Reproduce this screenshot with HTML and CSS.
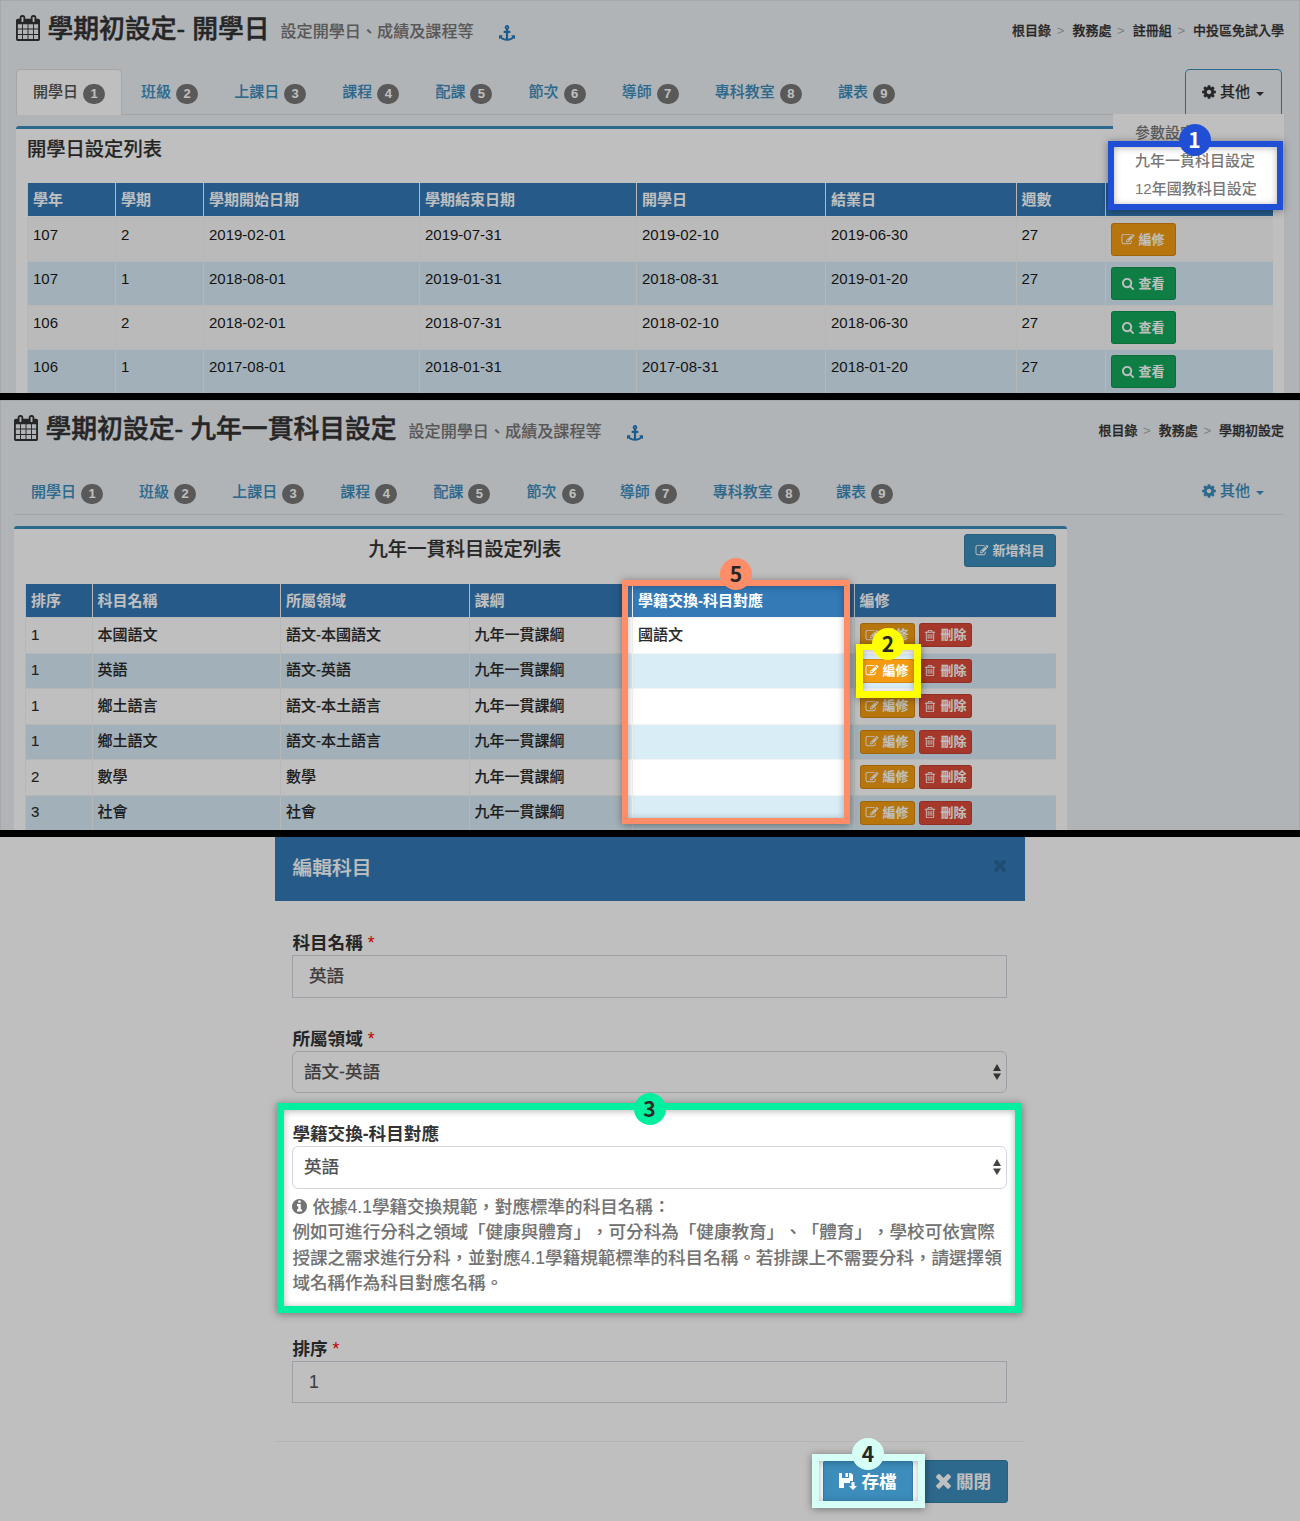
FILE: index.html
```html
<!DOCTYPE html>
<html lang="zh-Hant">
<head>
<meta charset="utf-8">
<title>學期初設定</title>
<link rel="stylesheet" href="styles.css">
</head>
<body>
<svg class="defs" width="0" height="0" aria-hidden="true">
<symbol id="calendar" viewBox="0 0 1664 1792"><path d="M128 1664h288v-288h-288v288zm352 0h320v-288h-320v288zm-352-352h288v-320h-288v320zm352 0h320v-320h-320v320zm-352-384h288v-288h-288v288zm736 736h320v-288h-320v288zm-384-736h320v-288h-320v288zm768 736h288v-288h-288v288zm-384-352h320v-320h-320v320zm-352-864v-288q0-13-9.5-22.5t-22.5-9.5h-64q-13 0-22.5 9.5t-9.5 22.5v288q0 13 9.5 22.5t22.5 9.5h64q13 0 22.5-9.5t9.5-22.5zm736 864h288v-320h-288v320zm-384-384h320v-288h-320v288zm384 0h288v-288h-288v288zm32-480v-288q0-13-9.5-22.5t-22.5-9.5h-64q-13 0-22.5 9.5t-9.5 22.5v288q0 13 9.5 22.5t22.5 9.5h64q13 0 22.5-9.5t9.5-22.5zm384-64v1280q0 52-38 90t-90 38h-1408q-52 0-90-38t-38-90v-1280q0-52 38-90t90-38h128v-96q0-66 47-113t113-47h64q66 0 113 47t47 113v96h384v-96q0-66 47-113t113-47h64q66 0 113 47t47 113v96h128q52 0 90 38t38 90z"/></symbol>
<symbol id="cog" viewBox="0 0 1792 1792"><path d="M1152 896q0-106-75-181t-181-75-181 75-75 181 75 181 181 75 181-75 75-181zm512-109v222q0 12-8 23t-20 13l-185 28q-19 54-39 91 35 50 107 138 10 12 10 25t-9 23q-27 37-99 108t-94 71q-12 0-26-9l-138-108q-44 23-91 38-16 136-29 186-7 28-36 28h-222q-14 0-24.5-8.5t-11.5-21.5l-28-184q-49-16-90-37l-141 107q-10 9-25 9-14 0-25-11-126-114-165-168-7-10-7-23 0-12 8-23 15-21 51-66.5t54-70.5q-27-50-41-99l-183-27q-13-2-21-12.5t-8-23.5v-222q0-12 8-23t19-13l186-28q14-46 39-92-40-57-107-138-10-12-10-24 0-10 9-23 26-36 98.5-107.5t94.5-71.5q13 0 26 10l138 107q44-23 91-38 16-136 29-186 7-28 36-28h222q14 0 24.5 8.5t11.5 21.5l28 184q49 16 90 37l142-107q9-9 24-9 13 0 25 10 129 119 165 170 7 8 7 22 0 12-8 23-15 21-51 66.5t-54 70.5q26 50 41 98l183 28q13 2 21 12.5t8 23.5z"/></symbol>
<symbol id="edit" viewBox="0 0 1792 1792"><path d="M888 1184l116-116-152-152-116 116v56h96v96h56zm440-720q-16-16-33 1l-350 350q-17 17-1 33t33-1l350-350q17-17 1-33zm80 594v190q0 119-84.5 203.5t-203.5 84.5h-832q-119 0-203.5-84.5t-84.5-203.5v-832q0-119 84.5-203.5t203.5-84.5h832q63 0 117 25 15 7 18 23 3 17-9 29l-49 49q-14 14-32 8-23-6-45-6h-832q-66 0-113 47t-47 113v832q0 66 47 113t113 47h832q66 0 113-47t47-113v-126q0-13 9-22l64-64q15-15 35-7t20 29zm-96-738l288 288-672 672h-288v-288zm444 132l-92 92-288-288 92-92q28-28 68-28t68 28l152 152q28 28 28 68t-28 68z"/></symbol>
<symbol id="search" viewBox="0 0 1792 1792"><path d="M1216 832q0-185-131.5-316.5t-316.5-131.5-316.5 131.5-131.5 316.5 131.5 316.5 316.5 131.5 316.5-131.5 131.5-316.5zm512 832q0 52-38 90t-90 38q-54 0-90-38l-343-342q-179 124-399 124-143 0-273.5-55.5t-225-150-150-225-55.5-273.5 55.5-273.5 150-225 225-150 273.5-55.5 273.5 55.5 225 150 150 225 55.5 273.5q0 220-124 399l343 343q37 37 37 90z"/></symbol>
<symbol id="trash" viewBox="0 0 1792 1792"><path d="M704 736v576q0 14-9 23t-23 9h-64q-14 0-23-9t-9-23v-576q0-14 9-23t23-9h64q14 0 23 9t9 23zm256 0v576q0 14-9 23t-23 9h-64q-14 0-23-9t-9-23v-576q0-14 9-23t23-9h64q14 0 23 9t9 23zm256 0v576q0 14-9 23t-23 9h-64q-14 0-23-9t-9-23v-576q0-14 9-23t23-9h64q14 0 23 9t9 23zm128 724v-948h-896v948q0 22 7 40.5t14.5 27 10.5 8.5h832q3 0 10.5-8.5t14.5-27 7-40.5zm-672-1076h448l-48-117q-7-9-17-11h-317q-10 2-17 11zm928 32v64q0 14-9 23t-23 9h-96v948q0 83-47 143.5t-113 60.5h-832q-66 0-113-58.5t-47-141.5v-952h-96q-14 0-23-9t-9-23v-64q0-14 9-23t23-9h309l70-167q15-37 54-63t79-26h320q40 0 79 26t54 63l70 167h309q14 0 23 9t9 23z"/></symbol>
<symbol id="info" viewBox="128 128 1536 1536"><path d="M1152 1376v-160q0-14-9-23t-23-9h-96v-512q0-14-9-23t-23-9h-320q-14 0-23 9t-9 23v160q0 14 9 23t23 9h96v320h-96q-14 0-23 9t-9 23v160q0 14 9 23t23 9h448q14 0 23-9t9-23zm-128-896v-160q0-14-9-23t-23-9h-192q-14 0-23 9t-9 23v160q0 14 9 23t23 9h192q14 0 23-9t9-23zm640 416q0 209-103 385.5t-279.5 279.5-385.5 103-385.5-103-279.5-279.5-103-385.5 103-385.5 279.5-279.5 385.5-103 385.5 103 279.5 279.5 103 385.5z"/></symbol>
<symbol id="times" viewBox="300 370 1190 1190"><path d="M1490 1322q0 40-28 68l-136 136q-28 28-68 28t-68-28l-294-294-294 294q-28 28-68 28t-68-28l-136-136q-28-28-28-68t28-68l294-294-294-294q-28-28-28-68t28-68l136-136q28-28 68-28t68 28l294 294 294-294q28-28 68-28t68 28l136 136q28 28 28 68t-28 68l-294 294 294 294q28 28 28 68z"/></symbol>
<symbol id="anchor" viewBox="0 0 1792 1792"><path d="M960 256q0-26-19-45t-45-19-45 19-19 45 19 45 45 19 45-19 19-45zm832 928v352q0 22-20 30-8 2-12 2-12 0-23-9l-93-93q-119 143-318.5 226.5t-429.5 83.5-429.5-83.5-318.5-226.5l-93 93q-9 9-23 9-4 0-12-2-20-8-20-30v-352q0-14 9-23t23-9h352q22 0 30 20 8 19-7 35l-100 100q67 91 189.5 153.5t271.5 82.5v-647h-192q-26 0-45-19t-19-45v-128q0-26 19-45t45-19h192v-163q-58-34-93-92.5t-35-128.5q0-106 75-181t181-75 181 75 75 181q0 70-35 128.5t-93 92.5v163h192q26 0 45 19t19 45v128q0 26-19 45t-45 19h-192v647q149-20 271.5-82.5t189.5-153.5l-100-100q-15-16-7-35 8-20 30-20h352q14 0 23 9t9 23z"/></symbol>
<symbol id="save" viewBox="0 0 18 18"><path d="M0 1h3v5h7V1h2l2 2v6h-3v2H5v5H0zM6.500 1h2.500v4H6.500zM12.500 10h3v4H18l-4 4-4-4h2.500z"/></symbol>
<symbol id="sort" viewBox="0 0 8 16"><path d="M4 0l4 7H0zM0 9.500h8l-4 6.500z"/></symbol>
</svg>

<main class="sheet">
<section class="screen first">
  <header class="page-head">
    <svg class="i-cal"><use href="#calendar"/></svg>
    <h1>學期初設定- 開學日</h1>
    <small>設定開學日、成績及課程等</small>
    <svg class="i-anchor"><use href="#anchor"/></svg>
    <ol class="crumbs"><li>根目錄</li><li>教務處</li><li>註冊組</li><li>中投區免試入學</li></ol>
  </header>
  <nav class="tabs">
    <a class="tab active">開學日<b>1</b></a><a class="tab">班級<b>2</b></a><a class="tab">上課日<b>3</b></a><a class="tab">課程<b>4</b></a><a class="tab">配課<b>5</b></a><a class="tab">節次<b>6</b></a><a class="tab">導師<b>7</b></a><a class="tab">專科教室<b>8</b></a><a class="tab">課表<b>9</b></a>
    <div class="more open"><svg class="i-cog"><use href="#cog"/></svg>其他<i class="caret"></i>
      <ul class="menu"><li>參數設定</li><li>九年一貫科目設定</li><li>12年國教科目設定</li></ul>
    </div>
  </nav>
  <div class="panel">
    <h2>開學日設定列表</h2>
    <div class="grid terms">
      <div class="row head"><span>學年</span><span>學期</span><span>學期開始日期</span><span>學期結束日期</span><span>開學日</span><span>結業日</span><span>週數</span><span></span></div>
      <div class="row odd"><span>107</span><span>2</span><span>2019-02-01</span><span>2019-07-31</span><span>2019-02-10</span><span>2019-06-30</span><span>27</span><span><a class="btn orange"><svg><use href="#edit"/></svg>編修</a></span></div>
      <div class="row even"><span>107</span><span>1</span><span>2018-08-01</span><span>2019-01-31</span><span>2018-08-31</span><span>2019-01-20</span><span>27</span><span><a class="btn green"><svg><use href="#search"/></svg>查看</a></span></div>
      <div class="row odd"><span>106</span><span>2</span><span>2018-02-01</span><span>2018-07-31</span><span>2018-02-10</span><span>2018-06-30</span><span>27</span><span><a class="btn green"><svg><use href="#search"/></svg>查看</a></span></div>
      <div class="row even"><span>106</span><span>1</span><span>2017-08-01</span><span>2018-01-31</span><span>2017-08-31</span><span>2018-01-20</span><span>27</span><span><a class="btn green"><svg><use href="#search"/></svg>查看</a></span></div>
    </div>
  </div>
</section>

<section class="screen second">
  <header class="page-head">
    <svg class="i-cal"><use href="#calendar"/></svg>
    <h1>學期初設定- 九年一貫科目設定</h1>
    <small>設定開學日、成績及課程等</small>
    <svg class="i-anchor"><use href="#anchor"/></svg>
    <ol class="crumbs"><li>根目錄</li><li>教務處</li><li>學期初設定</li></ol>
  </header>
  <nav class="tabs">
    <a class="tab">開學日<b>1</b></a><a class="tab">班級<b>2</b></a><a class="tab">上課日<b>3</b></a><a class="tab">課程<b>4</b></a><a class="tab">配課<b>5</b></a><a class="tab">節次<b>6</b></a><a class="tab">導師<b>7</b></a><a class="tab">專科教室<b>8</b></a><a class="tab">課表<b>9</b></a>
    <div class="more"><svg class="i-cog"><use href="#cog"/></svg>其他<i class="caret"></i></div>
  </nav>
  <div class="panel">
    <div class="panel-head"><h2>九年一貫科目設定列表</h2><a class="btn blue"><svg><use href="#edit"/></svg>新增科目</a></div>
    <div class="grid subjects">
      <div class="row head"><span>排序</span><span>科目名稱</span><span>所屬領域</span><span>課綱</span><span>學籍交換-科目對應</span><span>編修</span></div>
      <div class="row odd"><span>1</span><span>本國語文</span><span>語文-本國語文</span><span>九年一貫課綱</span><span>國語文</span><span><a class="btn xs orange"><svg><use href="#edit"/></svg>編修</a><a class="btn xs red"><svg><use href="#trash"/></svg>刪除</a></span></div>
      <div class="row even"><span>1</span><span>英語</span><span>語文-英語</span><span>九年一貫課綱</span><span></span><span><a class="btn xs orange"><svg><use href="#edit"/></svg>編修</a><a class="btn xs red"><svg><use href="#trash"/></svg>刪除</a></span></div>
      <div class="row odd"><span>1</span><span>鄉土語言</span><span>語文-本土語言</span><span>九年一貫課綱</span><span></span><span><a class="btn xs orange"><svg><use href="#edit"/></svg>編修</a><a class="btn xs red"><svg><use href="#trash"/></svg>刪除</a></span></div>
      <div class="row even"><span>1</span><span>鄉土語文</span><span>語文-本土語言</span><span>九年一貫課綱</span><span></span><span><a class="btn xs orange"><svg><use href="#edit"/></svg>編修</a><a class="btn xs red"><svg><use href="#trash"/></svg>刪除</a></span></div>
      <div class="row odd"><span>2</span><span>數學</span><span>數學</span><span>九年一貫課綱</span><span></span><span><a class="btn xs orange"><svg><use href="#edit"/></svg>編修</a><a class="btn xs red"><svg><use href="#trash"/></svg>刪除</a></span></div>
      <div class="row even"><span>3</span><span>社會</span><span>社會</span><span>九年一貫課綱</span><span></span><span><a class="btn xs orange"><svg><use href="#edit"/></svg>編修</a><a class="btn xs red"><svg><use href="#trash"/></svg>刪除</a></span></div>
    </div>
  </div>
</section>

<section class="third">
  <div class="modal">
    <header class="modal-head"><h3>編輯科目</h3><svg><use href="#times"/></svg></header>
    <div class="form">
      <div class="label">科目名稱 <em>*</em></div>
      <div class="field">英語</div>
      <div class="label">所屬領域 <em>*</em></div>
      <div class="field select">語文-英語<svg><use href="#sort"/></svg></div>
      <div class="label">學籍交換-科目對應</div>
      <div class="field select">英語<svg><use href="#sort"/></svg></div>
      <p class="help"><svg><use href="#info"/></svg>依據4.1學籍交換規範，對應標準的科目名稱：<br>例如可進行分科之領域「健康與體育」，可分科為「健康教育」、「體育」，學校可依實際<br>授課之需求進行分科，並對應4.1學籍規範標準的科目名稱。若排課上不需要分科，請選擇領<br>域名稱作為科目對應名稱。</p>
      <div class="label">排序 <em>*</em></div>
      <div class="field">1</div>
    </div>
    <footer class="modal-foot"><a class="btn lg blue save"><svg><use href="#save"/></svg>存檔</a><a class="btn lg blue close"><svg><use href="#times"/></svg>關閉</a></footer>
  </div>
</section>

<div class="dim"></div>
<div class="mark m1"><b>1</b></div>
<div class="mark m5"><b>5</b></div>
<div class="mark m2"><b>2</b></div>
<div class="mark m3"><b>3</b></div>
<div class="mark m4"><b>4</b></div>
</main>
</body>
</html>
```
FILE: styles.css
```css
* { box-sizing: border-box; }
body {
  margin: 0;
  background: #000;
  color: #333;
  font: 500 15px/20px "Liberation Sans", "Noto Sans CJK TC", sans-serif;
  text-spacing-trim: space-all;
}
.defs { position: absolute; }
svg { fill: currentColor; flex: none; display: block; }
h1, h2, h3, ol, ul, p { margin: 0; padding: 0; list-style: none; font-weight: 500; }
.sheet { position: relative; width: 1300px; height: 1521px; overflow: hidden; white-space: nowrap; }

/* slightly heavier strokes for CJK text at regular weight */
h1 { -webkit-text-stroke: .5px currentColor; }
h2, h3 { -webkit-text-stroke: .2px currentColor; }
.crumbs { -webkit-text-stroke: .25px currentColor; }
.tabs, small, .field, .help, .subjects .row:not(.head) { -webkit-text-stroke: .12px currentColor; }

.screen { background: #edf0f5; overflow: hidden; border: solid #dcdfe5; border-width: 1px 1px 0; }
.first { height: 393px; padding: 0 15px; margin-bottom: 7px; }
.second { height: 430px; padding: 0 15px 0 13px; margin-bottom: 7px; }

/* page heading */
.page-head { display: flex; align-items: center; height: 55px; }
.i-cal { width: 24px; height: 26px; margin: 0 7.500px 2px 0; }
h1 { font-size: 25.800px; line-height: 30px; width: 233px; }
.second h1 { width: 363px; }
.page-head small { font-size: 16.1px; color: #777; width: 218px; padding-top: 5px; }
.i-anchor { width: 16px; height: 16px; color: #2679b5; margin-top: 9px; }
.crumbs { display: flex; margin-left: auto; font-size: 13px; padding-top: 4px; }
.crumbs li + li::before { content: ">"; color: #aaa; padding: 0 8px 0 5.700px; font-size: 13px; -webkit-text-stroke: 0; }

/* tabs */
.tabs { display: flex; height: 46px; margin-top: 13px; border-bottom: 1px solid #ddd; gap: 2.100px; color: #3c8dbc; }
.tab { display: flex; align-items: center; gap: 5px; height: 46px; padding: 0 16px 2px; border: solid transparent; border-width: 1px 1px 0; border-radius: 5px 5px 0 0; }
.tab.active { background: #fff; border-color: #ddd; color: #555; }
.tab b { width: 22px; height: 20px; border-radius: 10px; background: #777; color: #fff; font-size: 13px; line-height: 20px; text-align: center; margin-top: 4px; -webkit-text-stroke: 0; }
.more { position: relative; display: flex; align-items: center; height: 46px; width: 99px; margin-left: auto; padding: 0 0 2px 15px; border: 1px solid transparent; }
.open { width: 97px; border: solid #3c8dbc; border-width: 1px 1px 0; border-radius: 5px 5px 0 0; color: #333; background: #edf0f5; margin-right: 2px; }
.i-cog { width: 16px; height: 16px; margin-right: 3px; }
.caret { border: 4px solid transparent; border-top-color: currentColor; border-bottom: 0; margin: 4px 0 0 6px; }
.menu { position: absolute; top: 44px; right: -3px; width: 171px; height: 94px; padding: 5px 0 0 22px; background: #fff; color: #777; z-index: 2; -webkit-text-stroke: 0; }
.menu li { height: 28px; line-height: 28px; }

/* panels and tables */
.panel { background: #fff; border-top: 3px solid #3c8dbc; border-radius: 3px 3px 0 0; margin-top: 11px; padding: 0 11px; height: 400px; }
.second .panel { width: 1053px; }
h2 { font-size: 19.300px; line-height: 42px; }
.first h2 { height: 54px; }
.panel-head { display: grid; grid-template-columns: 880px 1fr; height: 55px; }
.panel-head h2 { text-align: center; }
.panel-head .btn { justify-self: end; margin-top: 5px; width: 92px; }
.row { display: grid; color: #1a1a1a; }
.terms .row { grid-template-columns: 88px 88px 216px 217px 189px 190.500px 89px 167.500px; height: 44px; }
.terms .head { margin-bottom: .5px; }
.subjects .row { grid-template-columns: 66.500px 188.500px 188.500px 163.500px 221.500px 201px; height: 35.500px; color: #2a2a2a; }
.row span { border: solid #f4f4f4; border-width: 1px 0 0 1px; padding: 7.500px 0 0 5px; }
.subjects .row span { padding-top: 6.500px; }
.odd { background: #f9f9f9; }
.subjects .odd { background: #fff; }
.even { background: #d9edf7; }
.grid .head { background: #337ab7; color: #fff; font-weight: 700; height: 33px; }
.row.head span { border-top: 0; }
.terms .row.head span { padding-top: 7px; }
.subjects .row:not(.head) span:last-child { display: flex; gap: 4px; padding: 5px 0 0 5px; }

/* buttons */
.btn { display: flex; align-items: center; justify-content: center; gap: 3px; width: 65px; height: 33px; border: 1px solid rgba(0, 0, 0, .13); border-radius: 3px; color: #fff; font-size: 13px; font-weight: 700; -webkit-text-stroke: 0; }
.btn svg { width: 14px; height: 13px; }
.terms .btn { margin-top: -2px; }
.btn.xs { width: 55px; height: 24px; }
.btn.xs.red { width: 53px; }
.orange { background: #f39c12; }
.green { background: #14a95c; }
.red { background: #dd4b39; }
.blue { background: #3c8dbc; border-color: #367fa9; }

/* subject dialog */
.third { height: 684px; background: #fff; }
.modal { width: 750px; margin: 0 auto; }
.modal-head { display: flex; align-items: center; justify-content: space-between; height: 64px; padding: 0 18px 0 17.500px; background: #337ab7; color: #fff; }
h3 { font-size: 19.800px; padding-bottom: 3px; }
.modal-head svg { width: 12px; height: 12px; color: #2b6699; margin: 0 1px 7px 0; }
.form { padding: 28px 18px 0 17.400px; font-size: 17.600px; }
.label { height: 26px; line-height: 28px; font-weight: 700; }
.label em { color: #f00; font-style: normal; font-weight: 500; }
.field { display: flex; align-items: center; height: 42.500px; margin-bottom: 27px; padding-left: 15.500px; border: 1px solid #d2d6de; color: #555; }
.select { padding-left: 10.500px; border-radius: 6px; justify-content: space-between; padding-right: 5px; }
.select svg { width: 8px; height: 16px; color: #444; }
.help { color: #737373; line-height: 25.300px; margin: -20.500px 0 38.500px; font-size: 17.570px; }
.help svg { display: inline-block; width: 15px; height: 15px; margin-right: 5px; vertical-align: -1px; }
.modal-foot { display: flex; justify-content: flex-end; height: 80px; border-top: 1px solid #f0f0f0; margin-top: 37.500px; padding: 18.500px 17px 0 0; }
.form .field:last-child { margin-bottom: 0; }
.btn.lg { height: 43px; font-size: 17.600px; gap: 4px; }
.lg.save { width: 90px; margin-right: 6px; }
.lg.close { width: 89px; }
.btn.save svg { width: 18px; height: 18px; margin-bottom: 2px; }
.btn.close svg { width: 15px; height: 15px; margin-right: 1px; }

/* walkthrough overlay: dimmed page with lit cut-outs */
.dim {
  position: absolute; inset: 0; background: rgba(0, 0, 0, .25); z-index: 3;
  clip-path: polygon(evenodd, 0 0, 1300px 0, 1300px 1521px, 0 1521px, 0 0,
    1111px 144px, 1280px 144px, 1280px 207px, 1111px 207px, 1111px 144px, 0 0,
    625px 583px, 847px 583px, 847px 821px, 625px 821px, 625px 583px, 0 0,
    859px 647px, 918px 647px, 918px 695px, 859px 695px, 859px 647px, 0 0,
    280px 1106px, 1019px 1106px, 1019px 1310px, 280px 1310px, 280px 1106px, 0 0,
    815px 1457px, 921px 1457px, 921px 1505px, 815px 1505px, 815px 1457px, 0 0);
}
.mark { position: absolute; z-index: 4; border: 6px solid; box-shadow: 0 1px 8px rgba(0, 0, 0, .4), inset 0 1px 7px rgba(0, 0, 0, .3); }
.mark b { position: absolute; left: calc(50% - 16px); top: -23px; width: 32px; height: 32px; border-radius: 50%; color: #262626; font: 700 21px/31px "Noto Sans CJK TC", sans-serif; text-align: center; }
.m1 { left: 1108px; top: 141px; width: 175px; height: 69px; border-color: #204fd6; }
.m1 b { background: #204fd6; color: #fff; margin-left: -1px; }
.m5 { left: 622px; top: 580px; width: 228px; height: 244px; border-color: #ff8d67; }
.m5 b { background: #ff8d67; top: -28px; }
.m2 { left: 856px; top: 644px; width: 65px; height: 54px; border-width: 6px 7px 7px; border-color: #ff0; }
.m2 b { background: #ff0; top: -22px; margin-left: -.5px; }
.m3 { left: 277px; top: 1103px; width: 745px; height: 210px; border-width: 7px; border-color: #00f0a0; }
.m3 b { background: #00f0a0; top: -17px; }
.m4 { left: 812px; top: 1454px; width: 113px; height: 54px; border-width: 7px; border-color: #d6fff6; }
.m4 b { background: #d6fff6; margin-left: -.5px; }
```
